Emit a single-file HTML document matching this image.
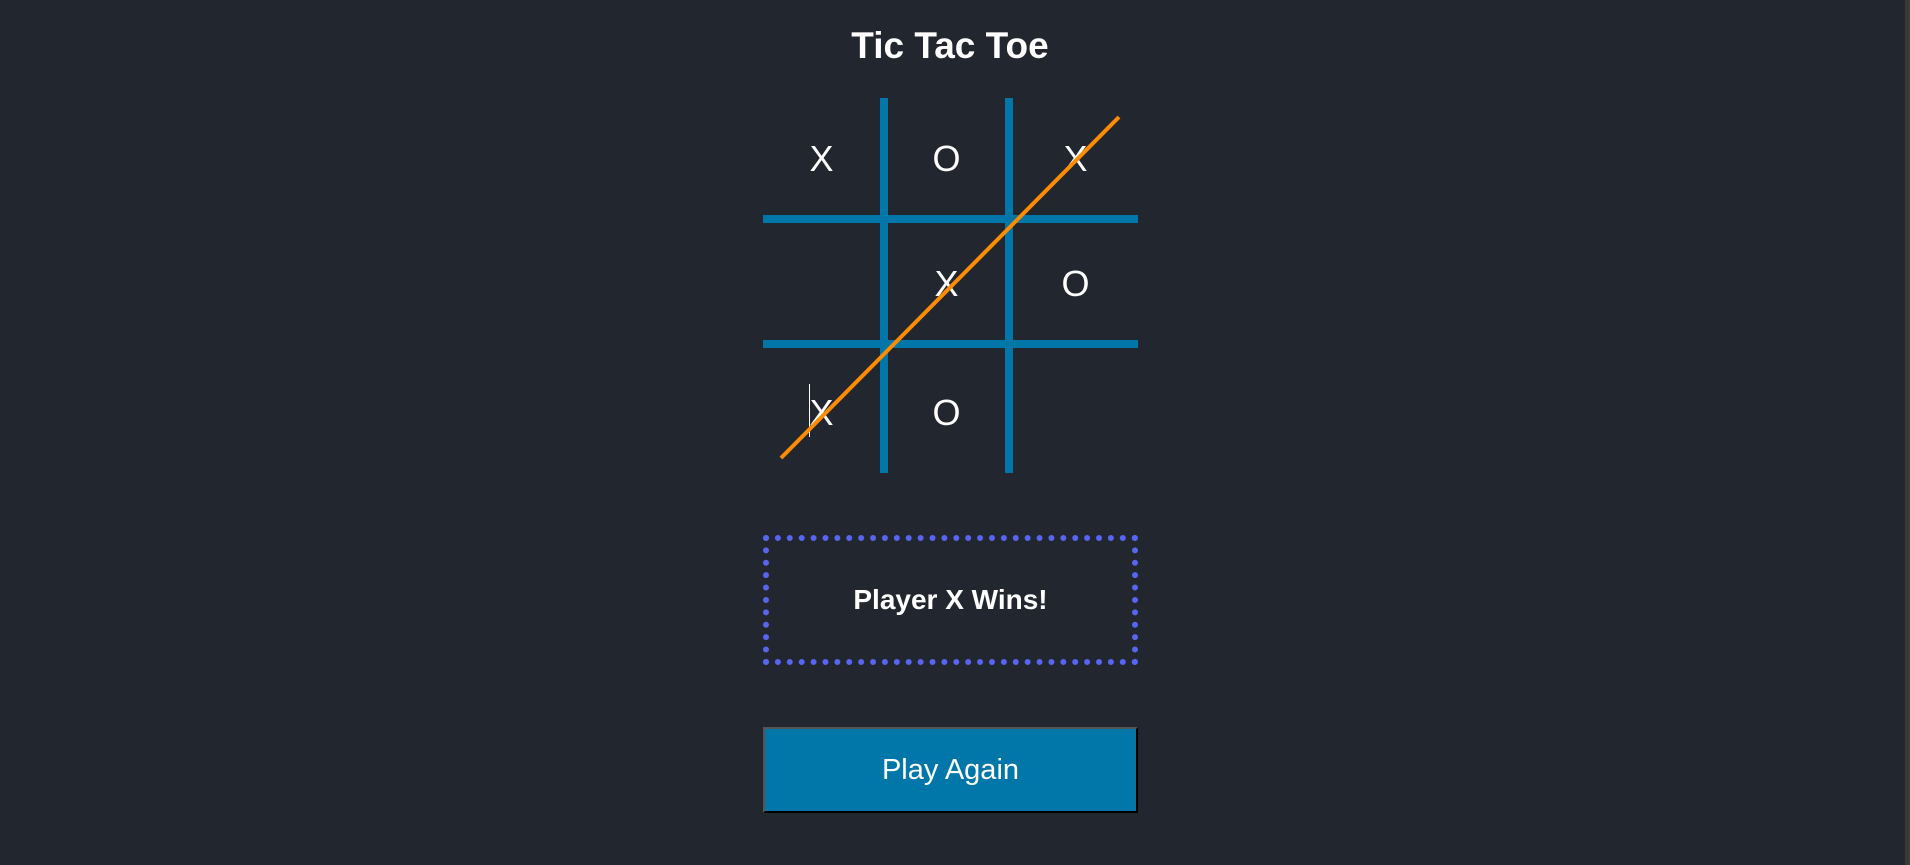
<!DOCTYPE html>
<html><head><meta charset="utf-8"><style>
html,body{margin:0;padding:0;width:1910px;height:865px;overflow:hidden;background:#22262f;}
body{position:relative;font-family:"Liberation Sans",sans-serif;color:#fff;}
.abs{position:absolute;}
.title{left:750px;width:400px;top:22px;text-align:center;font-weight:bold;font-size:37px;line-height:48px;}
.v{background:#0077a8;width:8px;top:98px;height:375px;}
.h{background:#0077a8;height:8px;left:763px;width:375px;}
.c{width:125px;height:40px;line-height:40px;text-align:center;font-size:36px;}
.status{left:763px;top:535px;width:375px;height:130px;box-sizing:border-box;border:6px dotted #5865f2;text-align:center;line-height:118px;font-weight:bold;font-size:28px;}
.btn{left:763px;top:727px;width:375px;height:86px;box-sizing:border-box;background:#0077a8;border:2px solid;border-color:#555 #000 #000 #555;text-align:center;line-height:82px;font-size:29px;}
.sb{left:1905px;top:0;width:5px;height:865px;background:#3a3a3a;}
</style></head><body>
<div class="abs title">Tic Tac Toe</div>
<div class="abs v" style="left:880px"></div>
<div class="abs v" style="left:1005px"></div>
<div class="abs h" style="top:215px"></div>
<div class="abs h" style="top:340px"></div>
<div class="abs c" style="left:759px;top:139px">X</div>
<div class="abs c" style="left:884px;top:139px">O</div>
<div class="abs c" style="left:1013px;top:139px">X</div>
<div class="abs c" style="left:884px;top:264px">X</div>
<div class="abs c" style="left:1013px;top:264px">O</div>
<div class="abs c" style="left:759px;top:393px">X</div>
<div class="abs c" style="left:884px;top:393px">O</div>
<div class="abs" style="left:809px;top:384px;width:1px;height:53px;background:#fff"></div>
<svg class="abs" style="left:0;top:0" width="1910" height="865"><line x1="781" y1="458" x2="1119" y2="117" stroke="#ff8c00" stroke-width="4"/></svg>
<div class="abs status">Player X Wins!</div>
<div class="abs btn">Play Again</div>
<div class="abs sb"></div>
</body></html>
